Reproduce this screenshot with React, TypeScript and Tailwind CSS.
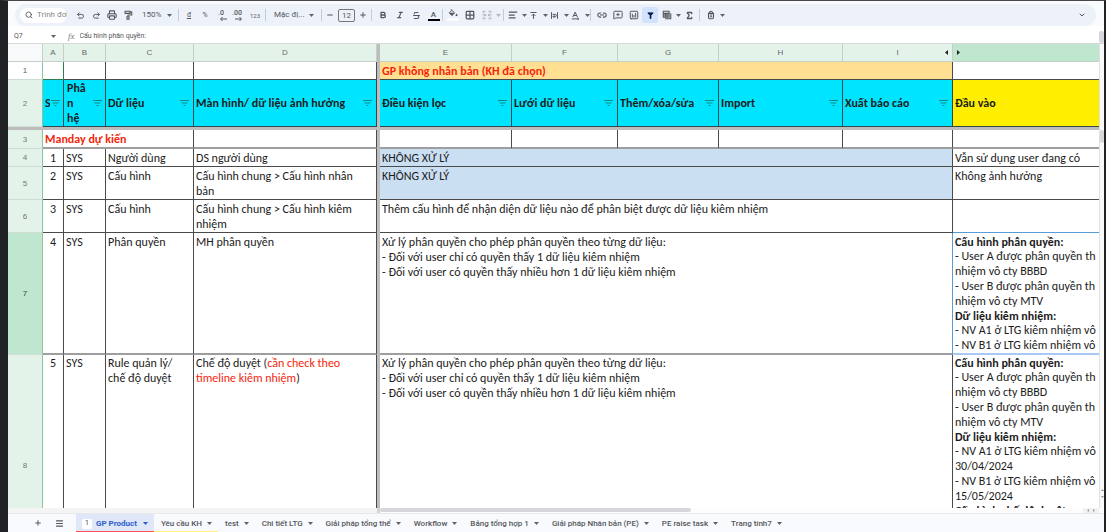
import React from "react";
import {
  Bold,
  ChevronDown,
  Grid2x2,
  Italic,
  Link2,
  Menu,
  MessageSquarePlus,
  Minus,
  Plus,
  Printer,
  Search,
  Sigma,
  SquareKanban,
  Strikethrough,
  AlignLeft,
} from "lucide-react";

const ui = "font-['Roboto','Liberation_Sans',sans-serif]";
const headFont = "font-['Liberation_Sans',sans-serif]";
const sheetFont = "font-['Carlito','Lato','Open_Sans',sans-serif]";

function Caret({ className = "text-[#5f6368]" }: { className?: string }) {
  return (
    <svg viewBox="0 0 5 3" className={`h-[3px] w-[5px] shrink-0 ${className}`} aria-hidden="true">
      <path d="M0 0h5L2.5 3z" fill="currentColor" />
    </svg>
  );
}

function Sep({ className = "" }: { className?: string }) {
  return <span className={`h-3 w-px shrink-0 bg-[#c7cbd1] ${className}`} />;
}

function Tool({ label, className = "w-4", children }: { label: string; className?: string; children: React.ReactNode }) {
  return (
    <button type="button" aria-label={label} className={`flex h-4 shrink-0 items-center justify-center rounded-xs ${className}`}>
      {children}
    </button>
  );
}

function DropTool({ label, children }: { label: string; children: React.ReactNode }) {
  return (
    <button type="button" aria-label={label} className="flex h-4 w-[21px] shrink-0 items-center gap-[3px]">
      <span className="flex w-[13px] justify-center">{children}</span>
      <Caret />
    </button>
  );
}

function Stroke({ d, fill = "none", className = "size-[10px]" }: { d: string; fill?: string; className?: string }) {
  return (
    <svg viewBox="0 0 24 24" className={className} fill={fill} stroke="currentColor" strokeWidth="2.6" aria-hidden="true">
      <path d={d} />
    </svg>
  );
}

function Toolbar() {
  return (
    <div className="ml-[7px] mr-2 flex h-[22px] shrink-0 items-center rounded-full bg-[#edf2fa] pl-[5px] text-[#54585c]">
      <label className="mr-[5px] flex h-[15px] w-[47px] items-center gap-1 rounded-full bg-white pl-[5px]">
        <Search className="size-2 shrink-0" strokeWidth={2.6} />
        <input aria-label="Trình đơn" defaultValue="Trình đơn" className="w-[30px] min-w-0 overflow-hidden bg-transparent text-[8px] text-[#80868b] outline-none" />
      </label>
      <Tool label="Hoàn tác"><Stroke className="size-[9px]" d="M9 4L4 9l5 5M4 9h11q5 0 5 5t-5 5H6" /></Tool>
      <Tool label="Làm lại"><Stroke className="size-[9px]" d="M15 4l5 5-5 5M20 9H9q-5 0-5 5t5 5h9" /></Tool>
      <Tool label="In"><Printer className="size-[10px]" strokeWidth={2.6} /></Tool>
      <Tool label="Sao chép định dạng"><Stroke d="M5 3h12v5H5zM17 5h4v7h-9v4M9.500 16h5v6h-5z" /></Tool>
      <button type="button" className="ml-1.5 flex w-[30px] items-center justify-between text-[8px]">150%<Caret /></button>
      <Sep className="ml-1.5 mr-0.5" />
      <Tool label="Tiền tệ"><span className="text-[7px] underline">đ</span></Tool>
      <Tool label="Phần trăm"><span className="text-[7px]">%</span></Tool>
      <Tool label="Giảm số thập phân">
        <span className="flex flex-col items-center text-[7px] font-medium leading-[7px]">
          .0
          <svg viewBox="0 0 8 4" className="ml-1 h-1 w-2" stroke="currentColor" fill="none"><path d="M8 2H2M3.500 0L1.500 2l2 2" /></svg>
        </span>
      </Tool>
      <Tool label="Tăng số thập phân">
        <span className="flex flex-col items-center text-[7px] font-medium leading-[7px]">
          .00
          <svg viewBox="0 0 8 4" className="ml-1 h-1 w-2" stroke="currentColor" fill="none"><path d="M0 2h6M4.500 0l2 2l-2 2" /></svg>
        </span>
      </Tool>
      <Tool label="Định dạng số" className="w-5"><span className="text-[6px]">123</span></Tool>
      <Sep />
      <button type="button" className="ml-2 flex w-10 items-center justify-between whitespace-nowrap text-[8px]">Mặc đị...<Caret /></button>
      <Sep className="ml-[7px] mr-0.5" />
      <Tool label="Giảm cỡ chữ" className="w-3"><Minus className="size-2" strokeWidth={3} /></Tool>
      <input aria-label="Cỡ chữ" defaultValue="12" className="mx-0.5 h-[13px] w-[17px] rounded-xs border border-[#747775] text-center text-[8px]" />
      <Tool label="Tăng cỡ chữ" className="w-3"><Plus className="size-2" strokeWidth={3} /></Tool>
      <Sep className="mx-0.5" />
      <Tool label="Đậm" className="w-[17px]"><Bold className="size-2" strokeWidth={4} /></Tool>
      <Tool label="Nghiêng" className="w-[17px]"><Italic className="size-2" strokeWidth={3.5} /></Tool>
      <Tool label="Gạch ngang" className="w-[17px]"><Strikethrough className="size-[9px]" strokeWidth={2.8} /></Tool>
      <Tool label="Màu chữ" className="w-[17px]">
        <span className="flex w-3 flex-col items-center border-b-2 border-black text-[8px] font-medium leading-[9px]">A</span>
      </Tool>
      <Sep className="mr-px" />
      <Tool label="Màu nền" className="w-[17px]">
        <svg viewBox="0 0 12 12" className="size-3" aria-hidden="true">
          <path d="M3.500 0L7.500 3.800 5 6.500 2.300 3.800 4.800 1.400" fill="none" stroke="currentColor" />
          <path d="M2 3.800h5.500L5 6.800zM9.500 4.500q2 2.500 0 2.600t0-2.600z" fill="currentColor" />
          <path d="M0 10.500h12" stroke="#fff" strokeWidth="2" />
        </svg>
      </Tool>
      <Tool label="Đường viền" className="w-[17px]"><Grid2x2 className="size-[10px]" strokeWidth={3} /></Tool>
      <Tool label="Hợp nhất ô" className="w-[17px] text-[#b4b8bd]"><Stroke d="M9 3H3v5M3 16v5h6M15 3h6v5M21 16v5h-6M1 12h8M23 12h-8M6 9l3 3-3 3M18 9l-3 3 3 3" /></Tool>
      <Tool label="Kiểu hợp nhất" className="w-[7px]"><Caret className="text-[#b4b8bd]" /></Tool>
      <Sep className="ml-px mr-0.5" />
      <DropTool label="Căn ngang"><AlignLeft className="size-[10px]" strokeWidth={3} /></DropTool>
      <DropTool label="Căn dọc"><Stroke className="size-[9px]" d="M4 4h16M12 21V8M7 13l5-5 5 5" /></DropTool>
      <DropTool label="Xuống dòng"><Stroke className="size-[9px]" d="M4 3v18M20 3v18M7 9h7q3 0 3 3t-3 3H9M12 11l-4 4 4 4" /></DropTool>
      <DropTool label="Xoay chữ"><Stroke className="size-[9px]" d="M5 16L11 3l6 13M7 12h8M2 21h18M17 18l4 3-4 3" /></DropTool>
      <Sep className="mr-[3px]" />
      <Tool label="Chèn liên kết"><Link2 className="size-[10px]" strokeWidth={2.6} /></Tool>
      <Tool label="Nhận xét"><MessageSquarePlus className="size-[10px]" strokeWidth={2.4} /></Tool>
      <Tool label="Biểu đồ"><SquareKanban className="size-[10px] -scale-y-100" strokeWidth={2.4} /></Tool>
      <Tool label="Bộ lọc" className="w-4 bg-[#d3e3fd] text-[#041e49]"><Stroke className="size-[9px]" d="M5 5h14l-6 7v8h-2v-8z" fill="currentColor" /></Tool>
      <span className="w-0.5" />
      <DropTool label="Chế độ xem bộ lọc"><Stroke d="M3 3h14v14H3zM3 8h14M8 8v9M7 21h14V8M12 8v9M3 12h14" /></DropTool>
      <Tool label="Hàm"><Sigma className="size-[9px]" strokeWidth={3.4} /></Tool>
      <Sep className="ml-0.5 mr-1" />
      <DropTool label="Công cụ nhập"><Stroke d="M6 8h12v10q0 3-3 3H9q-3 0-3-3zM8 8q0-5 4-5t4 5M9 12h6M9 16h6" /></DropTool>
      <button type="button" aria-label="Ẩn trình đơn" className="ml-auto mr-2.5"><ChevronDown className="size-2" strokeWidth={3} /></button>
    </div>
  );
}

function FilterButton() {
  return (
    <button type="button" aria-label="Lọc" className="ml-auto shrink-0">
      <svg viewBox="0 0 9 6" className="h-1.5 w-[9px]" fill="none" stroke="#128b86" aria-hidden="true">
        <path d="M0 .5h9M1.500 3h6M3.500 5.500h2" />
      </svg>
    </button>
  );
}

const cellBase = "overflow-hidden border-b border-r border-[#4a4a4a] pl-0.5 pt-0.5 align-top";

const heavyBottom = "border-b-2 border-b-[#9e9e9e]";

function Cell({ children, className = "pr-1", span = 1 }: { children?: React.ReactNode; className?: string; span?: number }) {
  return <td colSpan={span} className={`${cellBase} ${className}`}>{children}</td>;
}

function HeadCell({ children, className = "bg-[#00e5ff]", filter = true }: { children: React.ReactNode; className?: string; filter?: boolean }) {
  return (
    <td className={`overflow-hidden border-b border-r border-[#33484a] pl-0.5 pr-1 font-bold ${className}`}>
      <div className="flex items-center overflow-hidden whitespace-nowrap">
        <span className="min-w-0 overflow-hidden">{children}</span>
        {filter && <FilterButton />}
      </div>
    </td>
  );
}

function RowHead({ n, active = false }: { n: number; active?: boolean }) {
  return (
    <th
      scope="row"
      className={`border-b border-r border-b-[#cfdcd4] border-r-[#8cc3a0] p-0 align-middle text-[8px] font-normal ${headFont} ${
        active ? "bg-[#bfe6cf] text-[#33483b]" : n === 1 ? "bg-white text-[#5f6368]" : "bg-[#e4f3ea] text-[#6c7a71]"
      }`}
    >
      {n}
    </th>
  );
}

function FreezeColumn() {
  return <td className="bg-[#bdbdbd] p-0" />;
}

const letters = ["E", "F", "G", "H"];

function PermissionText() {
  return (
    <>
      <p>Xử lý phân quyền cho phép phân quyền theo từng dữ liệu:</p>
      <p>- Đối với user chỉ có quyền thấy 1 dữ liệu kiêm nhiệm</p>
      <p>- Đối với user có quyền thấy nhiều hơn 1 dữ liệu kiêm nhiệm</p>
    </>
  );
}

function Heading({ children }: { children: React.ReactNode }) {
  return <p className="font-bold leading-[14px]">{children}</p>;
}

function InputText({ dates = false }: { dates?: boolean }) {
  return (
    <div className="whitespace-nowrap">
      <Heading>Cấu hình phân quyền:</Heading>
      <p>- User A được phân quyền th</p>
      <p>nhiệm vô cty BBBD</p>
      <p>- User B được phân quyền th</p>
      <p>nhiệm vô cty MTV</p>
      <Heading>Dữ liệu kiêm nhiệm:</Heading>
      <p>- NV A1 ở LTG kiêm nhiệm vô</p>
      {dates && <p>30/04/2024</p>}
      <p>- NV B1 ở LTG kiêm nhiệm vô</p>
      {dates && <p>15/05/2024</p>}
      {dates && <Heading>Cấu hình chế độ duyệt:</Heading>}
    </div>
  );
}

function Sheet() {
  const head = `border-b border-r border-[#c3cfc7] bg-[#e4f3ea] p-0 text-[8px] font-normal text-[#5f6b64] ${headFont}`;
  return (
    <table className={`w-full table-fixed border-separate border-spacing-0 text-[12px] leading-[15px] text-[#1c1c1c] ${sheetFont}`}>
      <colgroup>
        <col className="w-[35px]" />
        <col className="w-[21px]" />
        <col className="w-[42px]" />
        <col className="w-[88px]" />
        <col className="w-[183px]" />
        <col className="w-[3px]" />
        <col className="w-[132px]" />
        <col className="w-[106px]" />
        <col className="w-[101px]" />
        <col className="w-[124px]" />
        <col className="w-[110px]" />
        <col />
      </colgroup>
      <thead>
        <tr className="h-[18px]">
          <th className="border-b border-r border-[#c3cfc7] bg-[#f8f9fa] p-0" />
          {["A", "B", "C", "D"].map((l) => <th key={l} scope="col" className={head}>{l}</th>)}
          <th className="bg-[#bdbdbd] p-0" />
          {letters.map((l) => <th key={l} scope="col" className={head}>{l}</th>)}
          <th scope="col" className={head}>
            <span className="flex items-center">
              <span className="w-[7px]" />
              <span className="flex-1">I</span>
              <svg viewBox="0 0 3 5" className="mr-1 h-[5px] w-[3px]"><path d="M3 0v5L0 2.500z" fill="#222" /></svg>
            </span>
          </th>
          <th scope="col" aria-label="Q" className="border-b border-[#c3cfc7] bg-[#bfe6cf] p-0">
            <svg viewBox="0 0 3 5" className="ml-1 h-[5px] w-[3px]"><path d="M0 0v5L3 2.500z" fill="#222" /></svg>
          </th>
        </tr>
      </thead>
      <tbody>
        <tr className="h-[18px]">
          <RowHead n={1} />
          <Cell className="border-b-[#2e7d4f] border-r-[#2e7d4f]" />
          <Cell /><Cell /><Cell />
          <FreezeColumn />
          <Cell span={5} className="bg-[#ffe092] font-bold text-[#f4260b]">GP không nhân bản (KH đã chọn)</Cell>
          <Cell className="border-r-0" />
        </tr>
        <tr className="h-[47px]">
          <RowHead n={2} />
          <td className="overflow-hidden border-b border-r border-[#33484a] bg-[#00e5ff] pl-0.5 pr-[3px] font-bold">
            <div className="flex items-center">
              <span className="w-[5px] overflow-hidden">S</span>
              <FilterButton />
            </div>
          </td>
          <td className="overflow-hidden border-b border-r border-[#33484a] bg-[#00e5ff] pl-[3px] pr-[3px] font-bold">
            <div className="flex items-center">
              <span>Phâ<br />n<br />hệ</span>
              <FilterButton />
            </div>
          </td>
          <HeadCell>Dữ liệu</HeadCell>
          <HeadCell>Màn hình/ dữ liệu ảnh hưởng</HeadCell>
          <FreezeColumn />
          <HeadCell>Điều kiện lọc</HeadCell>
          <HeadCell>Lưới dữ liệu</HeadCell>
          <HeadCell>Thêm/xóa/sửa</HeadCell>
          <HeadCell>Import</HeadCell>
          <HeadCell>Xuất báo cáo</HeadCell>
          <HeadCell className="border-r-0 bg-[#ffee00]" filter={false}>Đầu vào</HeadCell>
        </tr>
        <tr className="h-[3px]"><td colSpan={12} className="bg-[#bdbdbd] p-0" /></tr>
        <tr className="h-[19px]">
          <RowHead n={3} />
          <Cell span={3} className={`${heavyBottom} font-bold text-[#f4260b]`}>Manday dự kiến</Cell>
          <Cell className={heavyBottom} />
          <FreezeColumn />
          {[...letters, "I"].map((l) => <Cell key={l} className={heavyBottom} />)}
          <Cell className={`${heavyBottom} border-r-0`} />
        </tr>
        <tr className="h-[18px]">
          <RowHead n={4} />
          <Cell className="pr-0.5 text-center">1</Cell><Cell>SYS</Cell><Cell>Người dùng</Cell><Cell>DS người dùng</Cell>
          <FreezeColumn />
          <Cell span={5} className="bg-[#cbdff3]">KHÔNG XỬ LÝ</Cell>
          <Cell className="whitespace-nowrap border-r-0">Vẫn sử dụng user đang có</Cell>
        </tr>
        <tr className="h-[33px]">
          <RowHead n={5} />
          <Cell className="pr-0.5 text-center">2</Cell><Cell>SYS</Cell><Cell>Cấu hình</Cell><Cell>Cấu hình chung &gt; Cấu hình nhân bản</Cell>
          <FreezeColumn />
          <Cell span={5} className="bg-[#cbdff3]">KHÔNG XỬ LÝ</Cell>
          <Cell className="border-r-0">Không ảnh hưởng</Cell>
        </tr>
        <tr className="h-[33px]">
          <RowHead n={6} />
          <Cell className="pr-0.5 text-center">3</Cell><Cell>SYS</Cell><Cell>Cấu hình</Cell><Cell>Cấu hình chung &gt; Cấu hình kiêm nhiệm</Cell>
          <FreezeColumn />
          <Cell span={5}>Thêm cấu hình để nhận diện dữ liệu nào để phân biệt được dữ liệu kiêm nhiệm</Cell>
          <Cell className="border-r-0 border-b-[#5b9bd5]" />
        </tr>
        <tr className="h-[122px]">
          <RowHead n={7} active />
          <Cell className={`${heavyBottom} pr-0.5 text-center`}>4</Cell>
          <Cell className={heavyBottom}>SYS</Cell>
          <Cell className={heavyBottom}>Phân quyền</Cell>
          <Cell className={heavyBottom}>MH phân quyền</Cell>
          <FreezeColumn />
          <Cell span={5} className={`${heavyBottom} border-r-[#5b9bd5]`}><PermissionText /></Cell>
          <Cell className="border-b-2 border-r-0 border-b-[#a9c8f5]"><InputText /></Cell>
        </tr>
        <tr className="h-[222px] [&>td]:pt-px">
          <RowHead n={8} />
          <Cell className="pr-0.5 text-center">5</Cell>
          <Cell>SYS</Cell>
          <Cell>Rule quản lý/ chế độ duyệt</Cell>
          <Cell>Chế độ duyệt (<span className="text-[#f4260b]">cần check theo timeline kiêm nhiệm</span>)</Cell>
          <FreezeColumn />
          <Cell span={5}><PermissionText /></Cell>
          <Cell className="border-r-0"><InputText dates /></Cell>
        </tr>
      </tbody>
    </table>
  );
}

const tabs = ["Yêu cầu KH", "test", "Chi tiết LTG", "Giải pháp tổng thể", "Workflow", "Bảng tổng hợp 1", "Giải pháp Nhân bản (PE)", "PE raise task", "Trang tính7"];

function SheetTabs() {
  return (
    <nav className="flex h-[18px] shrink-0 items-stretch bg-[#f8fafd] text-[8px] font-medium text-[#54585c]">
      <button type="button" aria-label="Thêm trang tính" className="ml-[26px] w-[9px]"><Plus className="size-2" strokeWidth={3} /></button>
      <button type="button" aria-label="Tất cả trang tính" className="ml-3 mr-3 w-[9px]"><Menu className="size-[9px]" strokeWidth={3} /></button>
      <button type="button" className="flex items-center border-b border-[#ff5252] bg-[#dfe7f8] px-1.5 pt-0.5 font-bold text-[#2b5fc7]">
        <span className="mr-1 flex size-2.5 items-center justify-center rounded-xs bg-white text-[7px] font-normal text-[#444746]">1</span>
        GP Product
        <Caret className="ml-1.5 text-[#2b5fc7]" />
      </button>
      {tabs.map((t, i) => (
        <button key={t} type="button" className={`flex items-center gap-[5px] whitespace-nowrap border-b pl-[7px] pr-1.5 pt-0.5 ${i === 0 ? "border-[#fff27a]" : "border-transparent"}`}>
          {t}
          <Caret />
        </button>
      ))}
    </nav>
  );
}

export default function App() {
  return (
    <div className={`flex h-screen flex-col overflow-hidden border-l-8 border-r-2 border-t border-[#202124] border-t-[#4a4548] bg-white ${ui}`}>
      <div className="flex shrink-0 flex-col bg-[#f9fbfd] pt-[3px]"><Toolbar /></div>
      <div className="flex h-[17px] shrink-0 items-end text-[7px] leading-[14px] text-[#54585c]">
        <button type="button" className="ml-1.5 flex w-[42px] items-center justify-between">Q7<Caret /></button>
        <span className="ml-3 mr-[5px] font-['Liberation_Serif',serif] text-[9px] italic text-[#777]">fx</span>
        <input aria-label="Thanh công thức" defaultValue="Cấu hình phân quyền:" className="min-w-0 flex-1 bg-transparent outline-none" />
        <span className="h-3 w-[5px] rounded-xs bg-[#d5d7da]" />
      </div>
      <div className="flex min-h-0 flex-1 border-t border-[#d5dad7]">
        <main className="min-w-0 flex-1 overflow-hidden"><Sheet /></main>
        <div className="flex w-[5px] shrink-0 flex-col border-l border-[#e1e1e1] bg-[#fafafa]">
          <span className="mt-[86px] h-[13px] rounded-xs bg-[#d5d7da]" />
          <span className="mt-auto flex flex-col items-center gap-[5px] pb-2.5 text-[#9a9a9a]">
            <svg viewBox="0 0 3 2" className="h-0.5 w-[3px]" fill="currentColor"><path d="M0 2h3L1.500 0z" /></svg>
            <svg viewBox="0 0 3 2" className="h-0.5 w-[3px]" fill="currentColor"><path d="M0 0h3L1.500 2z" /></svg>
          </span>
        </div>
      </div>
      <div className="flex h-1.5 shrink-0 border-b border-[#e6e8ea] bg-[#fdfdfd]">
        <span className="w-[369px] bg-[#f4f4f5]" />
        <span className="w-[3px] bg-[#d5d5d5]" />
        <span className="h-1 w-[311px] rounded-full bg-[#d5d7da]" />
        <span className="ml-auto mr-[5px] flex w-4 items-center justify-evenly bg-[#f1f1f1] text-[#9a9a9a]">
          <svg viewBox="0 0 2 3" className="h-[3px] w-0.5" fill="currentColor"><path d="M2 0v3L0 1.500z" /></svg>
          <svg viewBox="0 0 2 3" className="h-[3px] w-0.5" fill="currentColor"><path d="M0 0v3L2 1.500z" /></svg>
        </span>
      </div>
      <SheetTabs />
    </div>
  );
}
